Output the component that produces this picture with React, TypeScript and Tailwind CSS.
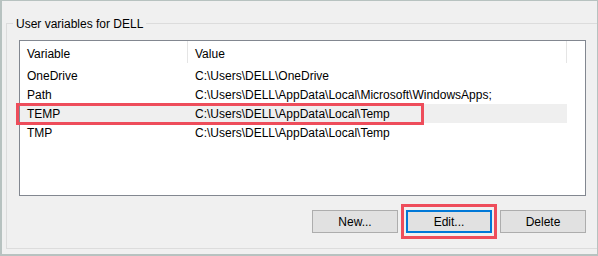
import React from "react";

const rows = [
  { name: "OneDrive", value: "C:\\Users\\DELL\\OneDrive" },
  { name: "Path", value: "C:\\Users\\DELL\\AppData\\Local\\Microsoft\\WindowsApps;" },
  { name: "TEMP", value: "C:\\Users\\DELL\\AppData\\Local\\Temp", selected: true },
  { name: "TMP", value: "C:\\Users\\DELL\\AppData\\Local\\Temp" },
];

const App = () => {
  return (
    <div
      className="w-[598px] h-[256px] bg-[#f0f0f0] border-t border-r border-l-2 border-b-2 border-[#b7c2c0] pl-[4px] pt-[22px] text-[12px] text-black"
      style={{ fontFamily: '"Liberation Sans", Arial, sans-serif' }}
    >
      <div className="h-[226px] border-l border-t border-b border-[#dcdcdc]">
        <div className="-mt-[8px] ml-[6px] w-fit bg-[#f0f0f0] px-[3px] leading-[16px]">
          User variables for DELL
        </div>

        <div className="mt-[8px] ml-[12px] w-[567px] h-[156px] border border-[#828790] bg-white">
          <div className="flex h-[25px] items-start">
            <div className="w-[167px] h-[25px] pl-[7px] flex items-center">Variable</div>
            <div className="w-px h-[22px] bg-[#e5e5e5]"></div>
            <div className="w-[378px] h-[25px] pl-[7px] flex items-center">Value</div>
            <div className="w-px h-[22px] bg-[#e5e5e5]"></div>
          </div>

          {rows.map((r) => (
            <div
              key={r.name}
              className={
                r.selected
                  ? "relative flex w-[547px] h-[19px] items-center bg-[#efefef]"
                  : "relative flex w-[547px] h-[19px] items-center"
              }
            >
              <div className="w-[168px] pl-[7px]">{r.name}</div>
              <div className="w-[379px] pl-[7px] whitespace-nowrap">{r.value}</div>
              {r.selected && (
                <div className="absolute -left-[4px] -top-[1px] w-[408px] h-[22px] border-[3px] border-[#ee4d5b]"></div>
              )}
            </div>
          ))}
        </div>

        <div className="mt-[14px] ml-[12px] w-[567px] flex justify-end gap-[8px]">
          <button className="w-[86px] h-[23px] bg-[#e1e1e1] border border-[#adadad]">New...</button>
          <div className="relative">
            <button className="w-[86px] h-[23px] bg-[#e1e1e1] border-2 border-[#0078d7]">Edit...</button>
            <div className="absolute -left-[5px] -top-[6px] w-[96px] h-[35px] border-[3px] border-[#ee4d5b]"></div>
          </div>
          <button className="w-[86px] h-[23px] bg-[#e1e1e1] border border-[#adadad]">Delete</button>
        </div>
      </div>
    </div>
  );
};

export default App;
